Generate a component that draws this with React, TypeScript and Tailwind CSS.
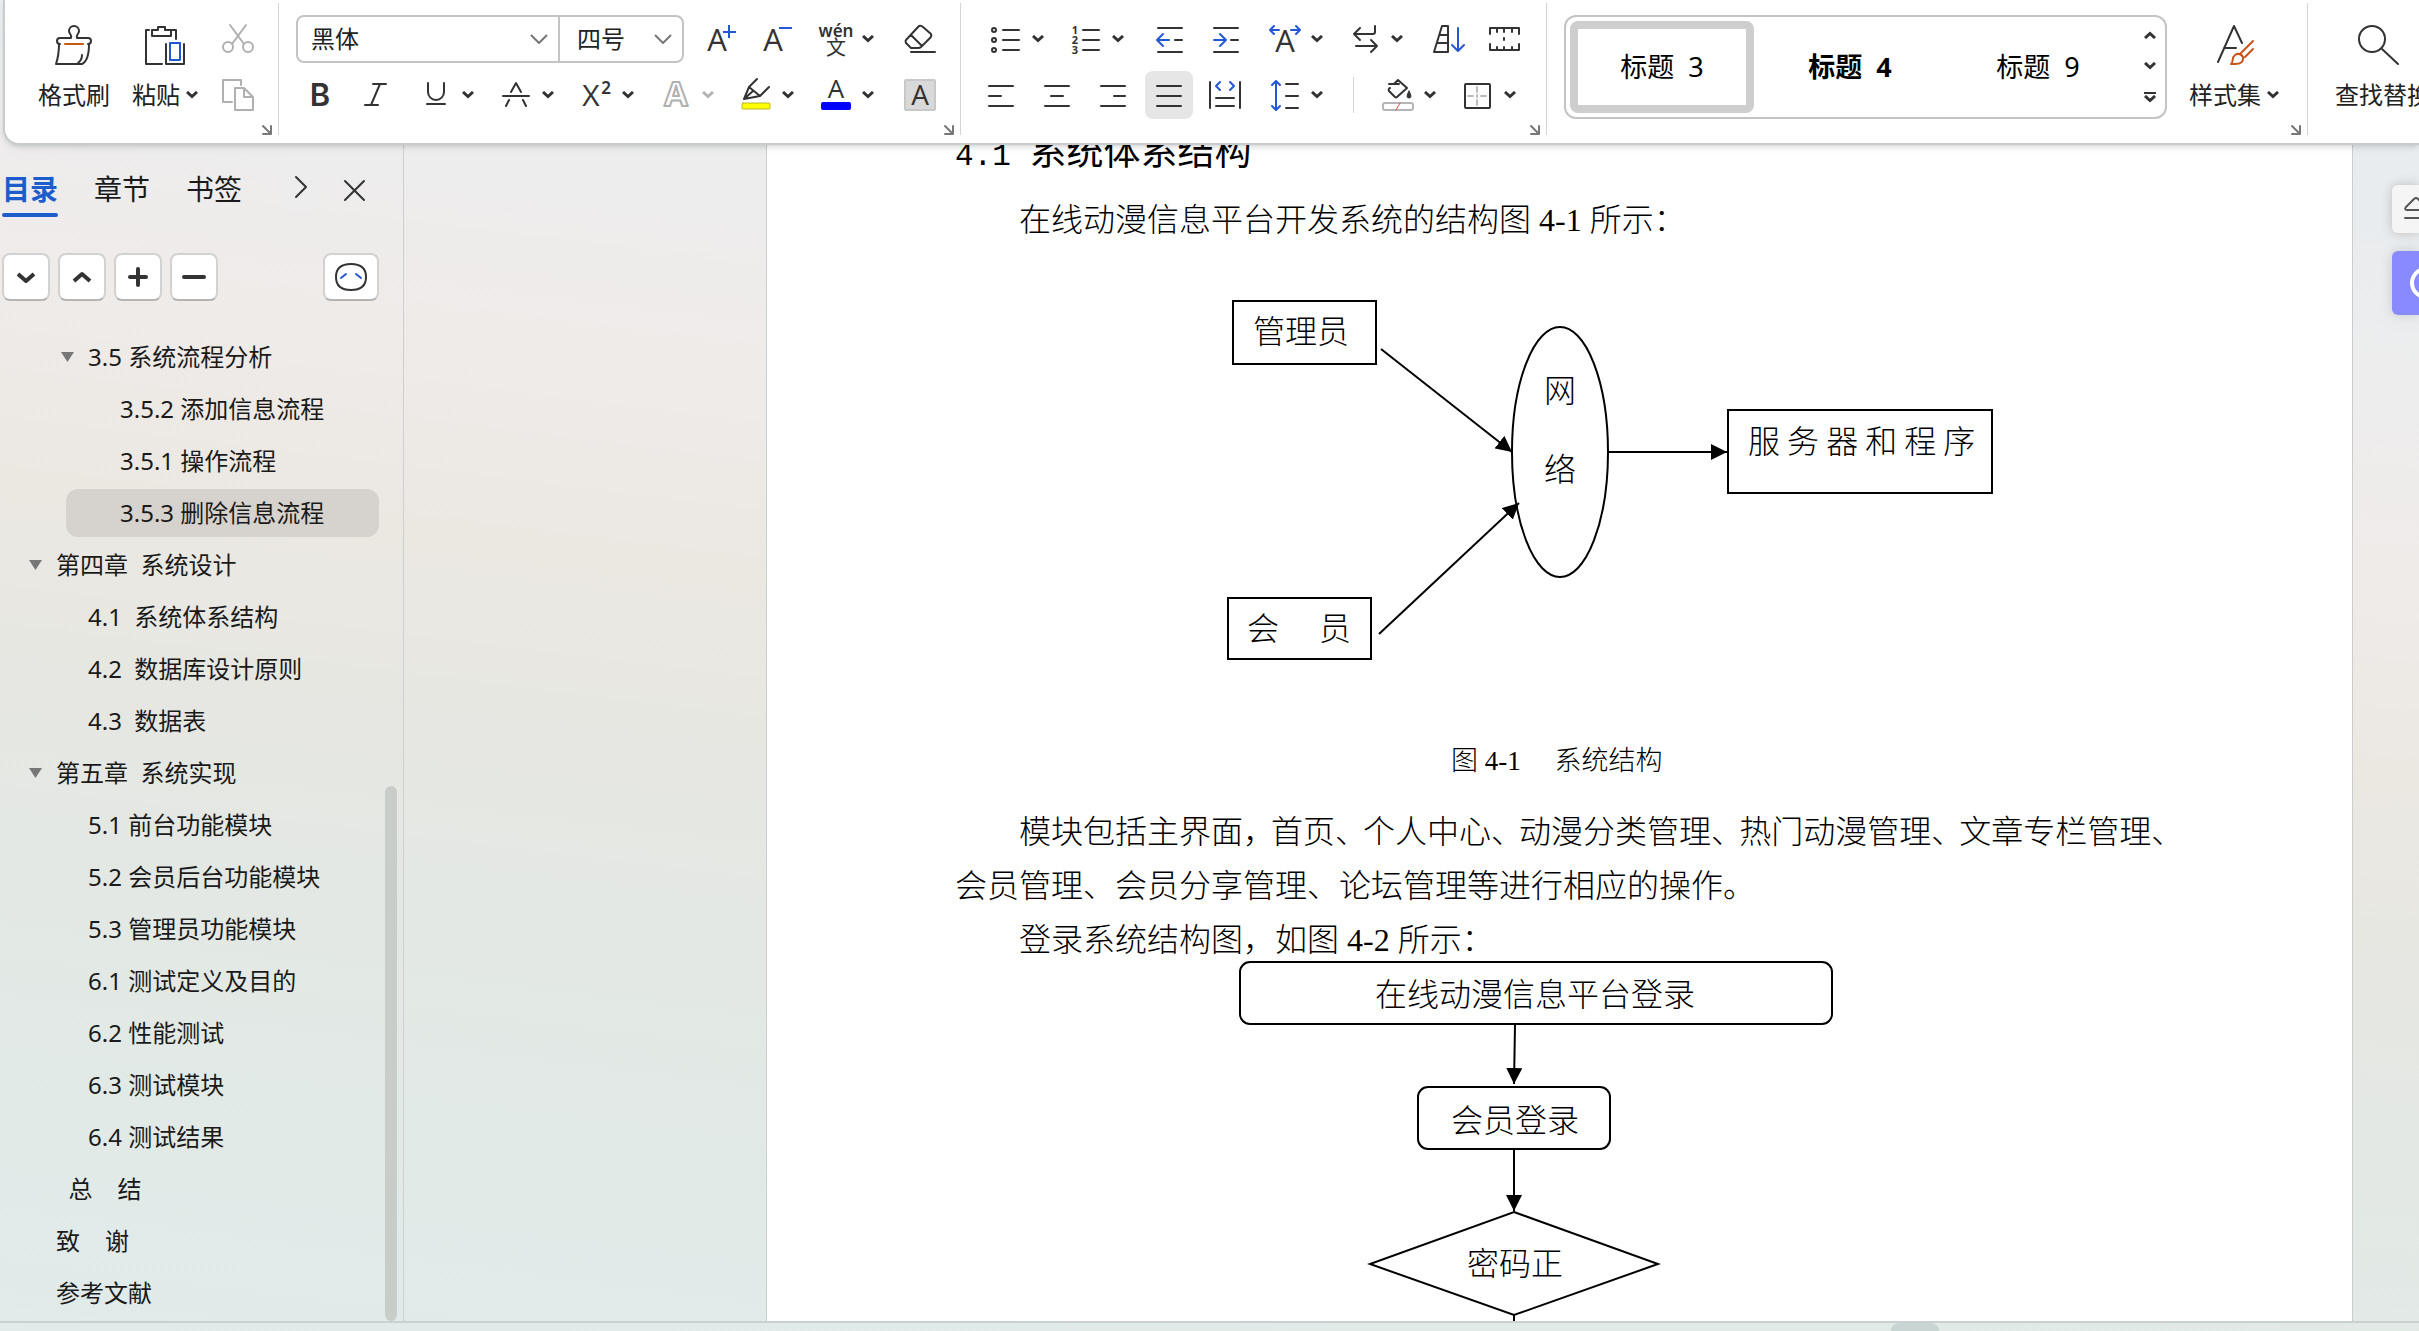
import React, { type ReactNode } from 'react'
import clsx from 'clsx'

const BLUE = '#2457d6'

const OUTLINE = [
    { level: 2, text: '3.5 系统流程分析', open: true },
    { level: 3, text: '3.5.2 添加信息流程' },
    { level: 3, text: '3.5.1 操作流程' },
    { level: 3, text: '3.5.3 删除信息流程', selected: true },
    { level: 1, text: '第四章  系统设计', open: true },
    { level: 2, text: '4.1  系统体系结构' },
    { level: 2, text: '4.2  数据库设计原则' },
    { level: 2, text: '4.3  数据表' },
    { level: 1, text: '第五章  系统实现', open: true },
    { level: 2, text: '5.1 前台功能模块' },
    { level: 2, text: '5.2 会员后台功能模块' },
    { level: 2, text: '5.3 管理员功能模块' },
    { level: 2, text: '6.1 测试定义及目的' },
    { level: 2, text: '6.2 性能测试' },
    { level: 2, text: '6.3 测试模块' },
    { level: 2, text: '6.4 测试结果' },
    { level: 1, text: '  总    结' },
    { level: 1, text: '致    谢' },
    { level: 1, text: '参考文献' },
]

const INDENT: Record<number, string> = {
    1: 'ml-[2px]',
    2: 'ml-[34px]',
    3: 'ml-[66px]',
}

const STYLES = [
    { name: '标题 3', selected: true },
    { name: '标题 4', bold: true },
    { name: '标题 9' },
]

interface IconProps {
    children: ReactNode
    size?: number
    color?: string
    width?: number
}

function Icon({ children, size = 32, color = '#333333', width = 2 }: IconProps) {
    return (
        <svg
            width={size}
            height={size}
            viewBox={`0 0 ${size} ${size}`}
            fill="none"
            stroke={color}
            strokeWidth={width}
            strokeLinecap="round"
            strokeLinejoin="round"
            className="shrink-0 overflow-visible"
        >
            {children}
        </svg>
    )
}

// Letter used inside an icon, kept as text
function Letter({ x = 16, y, size, children = 'A' }: { x?: number; y: number; size: number; children?: string }) {
    return (
        <text x={x} y={y} fontSize={size} textAnchor="middle" fill="#333333" stroke="none" className="font-['Open_Sans',sans-serif]">
            {children}
        </text>
    )
}

function Chevron({ up = false, color = '#333333' }: { up?: boolean; color?: string }) {
    return (
        <svg width="12" height="8" viewBox="0 0 12 8" fill="none" stroke={color} strokeWidth="3" className="shrink-0">
            <path d={up ? 'M1 7 L6 2.5 L11 7' : 'M1 1 L6 5.5 L11 1'} />
        </svg>
    )
}

function Tool({ label, children, active = false }: { label: string; children: ReactNode; active?: boolean }) {
    return (
        <button aria-label={label} className="flex h-14 w-14 shrink-0 items-center justify-center">
            <span className={clsx('flex h-12 w-12 items-center justify-center rounded-lg', active && 'bg-[#e6e6e6]')}>{children}</span>
        </button>
    )
}

function DropTool({ label, children, muted = false }: { label: string; children: ReactNode; muted?: boolean }) {
    return (
        <button aria-label={label} className="flex h-14 w-20 shrink-0 items-center pl-2">
            {children}
            <span className="flex w-8 justify-center">
                <Chevron color={muted ? '#b5b5b5' : '#333333'} />
            </span>
        </button>
    )
}

function BigTool({ label, drop = false, children }: { label: string; drop?: boolean; children: ReactNode }) {
    return (
        <button className="flex shrink-0 flex-col items-center pt-[14px]">
            {children}
            <span className="mt-[10px] flex h-10 items-center gap-[6px] whitespace-nowrap text-2xl">
                {label}
                {drop && <Chevron />}
            </span>
        </button>
    )
}

function Group({ className, children, launcher = true }: { className: string; children: ReactNode; launcher?: boolean }) {
    return (
        <div className={clsx('relative mt-[3px] h-[132px] shrink-0 pt-2', launcher && 'border-r border-[#d4d4d4]', className)}>
            {children}
            {launcher && (
                <button aria-label="更多设置" className="absolute bottom-0 right-[6px]">
                    <Icon size={10} color="#777777">
                        <path d="M1 1 L8 8 M9 1 V9 H1" />
                    </Icon>
                </button>
            )}
        </div>
    )
}

function FontSelect({ label, value, className }: { label: string; value: string; className: string }) {
    return (
        <label className={clsx('relative flex h-full items-center', className)}>
            <select aria-label={label} className="h-full w-full appearance-none bg-transparent pl-[13px] text-2xl outline-none">
                <option>{value}</option>
            </select>
            <svg width="18" height="10" viewBox="0 0 18 10" fill="none" stroke="#777777" strokeWidth="2" className="absolute right-[10px]">
                <path d="M1 1 L9 9 L17 1" />
            </svg>
        </label>
    )
}

function ClipboardGroup() {
    return (
        <Group className="flex w-[274px] pl-[33px]">
            <BigTool label="格式刷">
                <Icon size={40}>
                    <path d="M17 13 C18 9 15 9 15 6 a5 5 0 0 1 10 0 C25 9 22 9 23 13 H34 q3 0 3 3 q0 3 -3 3 M17 13 H6 q-3 0 -3 3 q0 3 3 3 M5 19 C5 27 4 33 2 39 H28 C34 36 35 28 35 19 M28 30 q0 5 -4 8" />
                    <path d="M11 19 H29" stroke="#c55a11" />
                </Icon>
            </BigTool>
            <div className="ml-[22px]">
                <BigTool label="粘贴" drop>
                    <Icon size={40}>
                        <path d="M4 5 H1 V39 H17 M27 5 H31 V14 M7 5 H13 V2 H20 V5 H26 V11 H7 Z M21 19 V39 H39 V19" />
                        <path d="M25 18 H35 V35 H25 Z" stroke={BLUE} />
                    </Icon>
                </BigTool>
            </div>
            <div className="ml-[12px] flex flex-col">
                <Tool label="剪切">
                    <Icon color="#b0b0b0">
                        <path d="M8 2 L22 21 M24 2 L10 21" />
                        <circle cx="6" cy="24" r="5" />
                        <circle cx="26" cy="24" r="5" />
                    </Icon>
                </Tool>
                <Tool label="复制">
                    <Icon color="#b0b0b0">
                        <path d="M10 23 H1 V1 H19 V6 M13 9 H22 L31 18 V31 H13 Z M22 9 V18 H31" />
                    </Icon>
                </Tool>
            </div>
        </Group>
    )
}

function FontGroup() {
    return (
        <Group className="w-[682px]">
            <div className="flex h-14 items-center pl-[17px]">
                <div className="flex h-12 w-[388px] rounded-lg border-2 border-[#c4c4c4]">
                    <FontSelect label="字体" value="黑体" className="w-[262px] border-r-2 border-[#c4c4c4]" />
                    <FontSelect label="字号" value="四号" className="flex-1 pl-1" />
                </div>
                <div className="ml-[12px] flex">
                    <Tool label="增大字号">
                        <Icon>
                            <Letter x={9} y={28} size={31} />
                            <path d="M15 9 H28 M21 2 V15" stroke={BLUE} strokeLinecap="butt" />
                        </Icon>
                    </Tool>
                    <Tool label="减小字号">
                        <Icon>
                            <Letter x={9} y={28} size={31} />
                            <path d="M15 5 H28" stroke={BLUE} strokeLinecap="butt" />
                        </Icon>
                    </Tool>
                </div>
                <div className="ml-1 flex">
                    <DropTool label="拼音指南">
                        <Icon>
                            <text x="16" y="14" fontSize="17" fontWeight="600" textAnchor="middle" fill="#333333" stroke="none">wén</text>
                            <text x="16" y="32" fontSize="20" textAnchor="middle" fill="#333333" stroke="none">文</text>
                        </Icon>
                    </DropTool>
                    <Tool label="清除格式">
                        <Icon>
                            <path d="M15 3 q2 -1 4 1 L27 11 q1 2 -1 4 L17 24 q-1 1 -3 1 H7 L2 20 q-1 -2 0 -3 Z M7 12 L18 23 M7 29 H31" />
                        </Icon>
                    </Tool>
                </div>
            </div>
            <div className="flex h-14 items-center pl-[13px]">
                <Tool label="加粗">
                    <Icon>
                        <text x="16" y="27" fontSize="31" fontWeight="600" textAnchor="middle" fill="#333333" stroke="none" className="font-[Inter,sans-serif]">B</text>
                    </Icon>
                </Tool>
                <Tool label="倾斜">
                    <Icon>
                        <path d="M13 5 H26 M5 26 H18 M20 5 L11 26" />
                    </Icon>
                </Tool>
                <div className="ml-2 flex">
                    <DropTool label="下划线">
                        <Icon>
                            <path d="M8 4 V13 a8 8 0 0 0 16 0 V4 M7 25 H25" />
                        </Icon>
                    </DropTool>
                    <DropTool label="删除线">
                        <Icon>
                            <path d="M11 13 L16 4 L21 13 M3 17 H29 M9 21 L6 27 M23 21 L26 27" />
                        </Icon>
                    </DropTool>
                    <DropTool label="上标">
                        <Icon>
                            <Letter x={11} y={27} size={30}>X</Letter>
                            <text x="26" y="15" fontSize="17" fontWeight="600" textAnchor="middle" fill="#333333" stroke="none">2</text>
                        </Icon>
                    </DropTool>
                    <DropTool label="文字效果" muted>
                        <Icon color="#b0b0b0">
                            <text x="16" y="27" fontSize="34" fontWeight="700" textAnchor="middle" fill="#ffffff">A</text>
                        </Icon>
                    </DropTool>
                    <DropTool label="突出显示">
                        <Icon>
                            <path d="M17 0 L9 8 L4 20 L20 17 L29 8 M9 8 L20 17 M4 20 L13 12" />
                            <rect x="2" y="24" width="28" height="6" rx="1" fill="#ffff00" stroke="#b8b82a" strokeWidth="1" />
                        </Icon>
                    </DropTool>
                    <DropTool label="字体颜色">
                        <Icon>
                            <Letter y={19} size={26} />
                            <rect x="1" y="23" width="30" height="8" rx="2" fill="#0000ff" stroke="none" />
                        </Icon>
                    </DropTool>
                    <Tool label="字符底纹">
                        <Icon>
                            <rect x="1" y="1" width="30" height="30" rx="1" fill="#d9d9d9" stroke="#c8c8c8" />
                            <Letter y={26} size={28} />
                        </Icon>
                    </Tool>
                </div>
            </div>
        </Group>
    )
}

function ParagraphGroup() {
    return (
        <Group className="w-[586px]">
            <div className="flex h-14 items-center pl-[21px]">
                <DropTool label="项目符号">
                    <Icon>
                        <circle cx="4" cy="7" r="2" />
                        <circle cx="4" cy="17" r="2" />
                        <circle cx="4" cy="27" r="2" />
                        <path d="M13 7 H29 M13 17 H29 M13 27 H29" />
                    </Icon>
                </DropTool>
                <DropTool label="编号">
                    <Icon>
                        <g fontSize="11" fontWeight="700" fill="#333333" stroke="none" textAnchor="middle">
                            <text x="5" y="11">1</text>
                            <text x="5" y="21">2</text>
                            <text x="5" y="31">3</text>
                        </g>
                        <path d="M13 7 H29 M13 17 H29 M13 27 H29" />
                    </Icon>
                </DropTool>
                <Tool label="减少缩进量">
                    <Icon>
                        <path d="M4 5 H28 M4 29 H28 M21 17 H28" />
                        <path d="M9 11 L3 17 L9 23 M3 17 H15" stroke={BLUE} />
                    </Icon>
                </Tool>
                <Tool label="增加缩进量">
                    <Icon>
                        <path d="M4 5 H28 M4 29 H28 M21 17 H28" />
                        <path d="M10 11 L16 17 L10 23 M4 17 H16" stroke={BLUE} />
                    </Icon>
                </Tool>
                <div className="ml-[7px] flex">
                    <DropTool label="字符缩放">
                        <Icon>
                            <Letter y={29} size={31} />
                            <path d="M5 3 L1 7 L5 11 M1 7 H10 M27 3 L31 7 L27 11 M31 7 H22" stroke={BLUE} />
                        </Icon>
                    </DropTool>
                    <DropTool label="文字方向">
                        <Icon>
                            <path d="M26 3 V9 q0 2 -2 2 H5 M11 5 L5 11 L11 17 M7 23 H28 M22 17 L28 23 L22 29" />
                        </Icon>
                    </DropTool>
                    <Tool label="排序">
                        <Icon>
                            <path d="M9 3 H15 V29 H1 Z M7 12 H15 M4 20 H15" />
                            <path d="M25 5 V28 M19 22 L25 28 L31 22" stroke={BLUE} />
                        </Icon>
                    </Tool>
                    <Tool label="显示标尺">
                        <Icon>
                            <path d="M1 11 V5 H30 V11 M8 5 V9 M15 5 V9 M23 5 V9 M1 21 V27 H30 V21 M8 27 V24 M15 27 V24 M23 27 V24 M15 15 V17" />
                        </Icon>
                    </Tool>
                </div>
            </div>
            <div className="flex h-14 items-center pl-[12px]">
                <Tool label="左对齐">
                    <Icon>
                        <path d="M4 7 H28 M4 17 H16 M4 27 H28" />
                    </Icon>
                </Tool>
                <Tool label="居中对齐">
                    <Icon>
                        <path d="M4 7 H28 M10 17 H22 M4 27 H28" />
                    </Icon>
                </Tool>
                <Tool label="右对齐">
                    <Icon>
                        <path d="M4 7 H28 M17 17 H28 M4 27 H28" />
                    </Icon>
                </Tool>
                <Tool label="两端对齐" active>
                    <Icon>
                        <path d="M4 7 H28 M4 17 H28 M4 27 H28" />
                    </Icon>
                </Tool>
                <Tool label="分散对齐">
                    <Icon>
                        <path d="M1 3 V29 M31 3 V29 M7 19 H25 M7 27 H25" />
                        <path d="M11 3 L7 7 L11 11 M21 3 L25 7 L21 11" stroke={BLUE} />
                    </Icon>
                </Tool>
                <div className="ml-2 flex items-center">
                    <DropTool label="行距">
                        <Icon>
                            <path d="M17 5 H29 M17 17 H29 M17 29 H29" />
                            <path d="M7 3 V30 M3 6 L7 2 L11 6 M3 27 L7 31 L11 27" stroke={BLUE} />
                        </Icon>
                    </DropTool>
                    <span className="ml-3 mr-5 h-9 w-px bg-[#d4d4d4]" />
                    <DropTool label="底纹颜色">
                        <Icon>
                            <path d="M7 5 H17 M12 5 L16 1 L25 9 L15 18 q-1 1 -2 0 L7 12 q-1 -2 1 -3" />
                            <path d="M27 12 q4 7 0 7 q-4 0 0 -7" fill="#333333" strokeWidth="1" />
                            <rect x="1" y="24" width="30" height="7" rx="2" stroke="#b5b5b5" />
                            <path d="M18 24 L14 31" stroke="#e04848" strokeWidth="1" />
                        </Icon>
                    </DropTool>
                    <DropTool label="边框">
                        <Icon>
                            <rect x="3" y="5" width="25" height="24" rx="1" />
                            <path d="M15 8 V13 M15 21 V26 M6 17 H11 M19 17 H24 M15 16 V18" stroke="#bbbbbb" />
                        </Icon>
                    </DropTool>
                </div>
            </div>
        </Group>
    )
}

function StylesGroup() {
    return (
        <Group className="flex w-[761px] pl-[17px]">
            <div className="mt-1 flex h-[104px] w-[603px] items-center gap-1 rounded-xl border-2 border-[#c4c4c4] px-1">
                {STYLES.map((style) => (
                    <button
                        key={style.name}
                        className={clsx(
                            'flex h-[92px] w-[184px] items-center justify-center rounded-lg border-8 text-[27px] text-black',
                            style.selected ? 'border-[#cecece]' : 'border-transparent',
                            style.bold && 'font-bold'
                        )}
                    >
                        <span className="whitespace-pre">{style.name.replace(' ', '  ')}</span>
                    </button>
                ))}
                <div className="flex h-full flex-1 flex-col items-end justify-between py-[14px] pr-[5px]">
                    <button aria-label="上一行"><Chevron up /></button>
                    <button aria-label="下一行"><Chevron /></button>
                    <button aria-label="展开样式" className="flex flex-col items-center gap-px">
                        <span className="h-[2px] w-3 bg-[#333333]" />
                        <Chevron />
                    </button>
                </div>
            </div>
            <div className="ml-[22px]">
                <BigTool label="样式集" drop>
                    <Icon size={40}>
                        <path d="M4 37 L20 1 L28 18 M10 23 H22" />
                        <path d="M39 16 L27 28 M39 24 L31 32 M17 39 C20 37 17 33 21 30 q5 -3 8 2 q1 7 -8 7 Z" stroke="#c9531a" />
                    </Icon>
                </BigTool>
            </div>
        </Group>
    )
}

function Ribbon() {
    return (
        <header className="relative z-10 ml-[3px] flex h-[145px] shrink-0 overflow-hidden rounded-bl-2xl border-b-2 border-l-2 border-[#c8cccc] bg-white text-[#222222] shadow-md">
            <ClipboardGroup />
            <FontGroup />
            <ParagraphGroup />
            <StylesGroup />
            <Group className="pl-[27px]" launcher={false}>
                <BigTool label="查找替换">
                    <Icon size={40}>
                        <circle cx="9" cy="14" r="13" />
                        <path d="M19 24 L35 39" />
                    </Icon>
                </BigTool>
            </Group>
        </header>
    )
}

function PaneButton({ label, wide = false, children }: { label: string; wide?: boolean; children: ReactNode }) {
    return (
        <button
            aria-label={label}
            className={clsx(
                'flex h-12 items-center justify-center rounded-lg border-2 border-[#d2d2d2] border-b-[#b4b4b4] bg-white',
                wide ? 'ml-auto w-14' : 'w-12'
            )}
        >
            {children}
        </button>
    )
}

function Sidebar() {
    return (
        <aside className="flex w-[404px] shrink-0 flex-col border-r border-[#cfcfcf] text-[#1a1a1a]">
            <nav className="flex h-[72px] items-end pl-[2px] text-[28px] leading-[48px]">
                <button className="flex h-[52px] w-14 flex-col justify-between font-bold text-[#1c5ccc]">
                    目录
                    <span className="h-1 w-full rounded-full bg-[#1c5ccc]" />
                </button>
                <button className="ml-9 pb-1">章节</button>
                <button className="ml-9 pb-1">书签</button>
                <button aria-label="更多标签" className="mb-[6px] ml-[38px] flex h-12 w-10 items-center justify-center rounded-lg bg-[#ededed]">
                    <Icon size={22}>
                        <path d="M7 1 L17 11 L7 21" />
                    </Icon>
                </button>
                <button aria-label="关闭" className="mb-[6px] ml-6 flex h-10 items-center">
                    <Icon size={22}>
                        <path d="M1 1 L20 20 M20 1 L1 20" />
                    </Icon>
                </button>
            </nav>
            <div className="mt-9 flex gap-2 pl-[2px] pr-6">
                <PaneButton label="展开">
                    <Icon size={24} width={4}><path d="M4 9 L12 16 L20 9" strokeLinecap="butt" /></Icon>
                </PaneButton>
                <PaneButton label="折叠">
                    <Icon size={24} width={4}><path d="M4 16 L12 9 L20 16" strokeLinecap="butt" /></Icon>
                </PaneButton>
                <PaneButton label="新增">
                    <Icon size={24} width={4}><path d="M4 12 H20 M12 4 V20" /></Icon>
                </PaneButton>
                <PaneButton label="删除">
                    <Icon size={24} width={4}><path d="M2 12 H22" /></Icon>
                </PaneButton>
                <PaneButton label="智能识别目录" wide>
                    <Icon>
                        <path d="M16 3 C27 3 31 8 31 16 C31 25 26 29 16 29 C6 29 1 25 1 16 C1 8 5 3 16 3 Z" />
                        <path d="M6 17 L11 13 M21 13 L26 17" stroke={BLUE} />
                    </Icon>
                </PaneButton>
            </div>
            <div className="mt-[30px] flex min-h-0 flex-1">
                <ul className="flex-1 overflow-hidden">
                    {OUTLINE.map((item) => (
                        <li key={item.text} className={clsx('flex h-[52px] py-[2px]', INDENT[item.level])}>
                            <button className={clsx('flex flex-1 items-center rounded-xl text-left text-2xl', item.selected && 'bg-[#d6d2ce]')}>
                                <span className="flex w-[54px] shrink-0 justify-end pr-[14px]">
                                    {item.open && (
                                        <svg width="13" height="10" viewBox="0 0 13 10" fill="#777777">
                                            <path d="M0 0 H13 L6.5 10 Z" />
                                        </svg>
                                    )}
                                </span>
                                <span className="whitespace-pre">{item.text}</span>
                            </button>
                        </li>
                    ))}
                </ul>
                <div className="mx-[6px] flex w-3 flex-col justify-end">
                    <div className="h-[54%] rounded-full bg-[#c9cdca]" />
                </div>
            </div>
        </aside>
    )
}

function ArrowMarker({ id }: { id: string }) {
    return (
        <marker id={id} viewBox="0 0 16 16" refX="16" refY="8" markerWidth="16" markerHeight="16" markerUnits="userSpaceOnUse" orient="auto">
            <path d="M0 0 L16 8 L0 16 Z" fill="#000000" />
        </marker>
    )
}

function StructureFigure() {
    return (
        <svg width="1200" height="487" viewBox="0 0 1200 487" className="block">
            <defs>
                <ArrowMarker id="structure-arrow" />
            </defs>
            <g fill="none" stroke="#000000" strokeWidth="2">
                <rect x="278" y="54" width="143" height="63" />
                <rect x="273" y="351" width="143" height="61" />
                <rect x="773" y="163" width="264" height="83" />
                <ellipse cx="605" cy="205" rx="48" ry="125" />
                <path d="M426 102 L557 205" markerEnd="url(#structure-arrow)" />
                <path d="M424 387 L564 256" markerEnd="url(#structure-arrow)" />
                <path d="M653 205 H772" markerEnd="url(#structure-arrow)" />
            </g>
            <g fontSize="32">
                <text x="298" y="96">管理员</text>
                <text x="292" y="393" className="whitespace-pre">会     员</text>
                <text x="605" y="155" textAnchor="middle">网</text>
                <text x="605" y="234" textAnchor="middle">络</text>
                <text x="793" y="206" className="font-['Noto_Sans_CJK_SC',sans-serif]">服 务 器 和 程 序</text>
            </g>
        </svg>
    )
}

function LoginFigure() {
    return (
        <svg width="1200" height="380" viewBox="0 0 1200 380" className="-mt-2 block">
            <defs>
                <ArrowMarker id="login-arrow" />
            </defs>
            <g fill="none" stroke="#000000" strokeWidth="2">
                <rect x="285" y="3" width="592" height="62" rx="10" />
                <rect x="463" y="128" width="192" height="62" rx="10" />
                <path d="M560 66 L559 125" markerEnd="url(#login-arrow)" />
                <path d="M559 191 V252" markerEnd="url(#login-arrow)" />
                <path d="M559 253 L703 305 L559 356 L415 305 Z" />
                <path d="M559 356 V380" />
            </g>
            <g fontSize="32" textAnchor="middle">
                <text x="580" y="47">在线动漫信息平台登录</text>
                <text x="560" y="173">会员登录</text>
                <text x="560" y="316">密码正</text>
            </g>
        </svg>
    )
}

// Separator in a justified line, set tighter than its full-width box
function Tight({ children }: { children: string }) {
    return <span className="-mr-1">{children}</span>
}

function DocumentPage() {
    return (
        <article className="ml-[362px] min-w-0 flex-1 overflow-hidden whitespace-nowrap border-x border-[#cccccc] bg-white pl-[188px] font-['Liberation_Serif','Noto_Sans_CJK_SC',serif] text-[32px] font-light leading-[54px] text-black">
            <h2 className="-mt-[23px] h-[71px] font-['Noto_Sans_CJK_SC',sans-serif] text-[37px] font-normal">
                <span className="font-['Liberation_Mono',monospace] text-[31px]">4.1 </span>
                系统体系结构
            </h2>
            <p className="indent-16">在线动漫信息平台开发系统的结构图 4-1 所示：</p>
            <StructureFigure />
            <p className="mb-[17px] whitespace-pre pl-[496px] text-[27px]">图 4-1 　系统结构</p>
            <p className="indent-16">
                模块包括主界面<Tight>，</Tight>首页<Tight>、</Tight>个人中心<Tight>、</Tight>动漫分类管理<Tight>、</Tight>热门动漫管理<Tight>、</Tight>文章专栏管理、
                <br />
                会员管理、会员分享管理、论坛管理等进行相应的操作。
            </p>
            <p className="indent-16">登录系统结构图，如图 4-2 所示：</p>
            <LoginFigure />
        </article>
    )
}

function SideTools() {
    return (
        <div className="flex w-[66px] shrink-0 flex-col items-end gap-[18px] pt-10">
            <button aria-label="折叠工具栏" className="flex h-12 w-[27px] items-center overflow-hidden rounded-l-md bg-[#f5f5f5] pl-3 shadow-[0_0_12px_rgba(0,0,0,0.2)]">
                <Icon size={24} color="#555555">
                    <path d="M3 13 q-3 0 -1 -3 L10 2 q2 -2 4 0 L22 10 q2 3 -1 3 Z M1 21 H23" />
                </Icon>
            </button>
            <button aria-label="智能助手" className="flex h-16 w-[27px] items-center overflow-hidden rounded-l-md bg-[#8a8aff] pl-[18px] shadow-[0_0_12px_rgba(0,0,0,0.15)]">
                <Icon size={32} color="#ffffff" width={4}>
                    <circle cx="16" cy="16" r="14" />
                </Icon>
            </button>
        </div>
    )
}

export default function App() {
    return (
        <div className="flex h-screen flex-col overflow-hidden bg-[linear-gradient(187deg,#e6edf0_0%,#e9ecee_14%,#ededed_24%,#efebe9_36%,#ebe8e2_48%,#e6e7e2_60%,#e3e8e4_72%,#e1eae7_88%,#e0ebea_100%)] font-['Noto_Sans','Noto_Sans_CJK_SC',sans-serif]">
            <Ribbon />
            <main className="flex min-h-0 flex-1">
                <Sidebar />
                <DocumentPage />
                <SideTools />
            </main>
            <footer className="flex h-[10px] shrink-0 justify-end border-t-2 border-[#c8d1cf] pr-[480px]">
                <div className="h-full w-12 rounded-t-lg bg-[#c9d5d3]" />
            </footer>
        </div>
    )
}
